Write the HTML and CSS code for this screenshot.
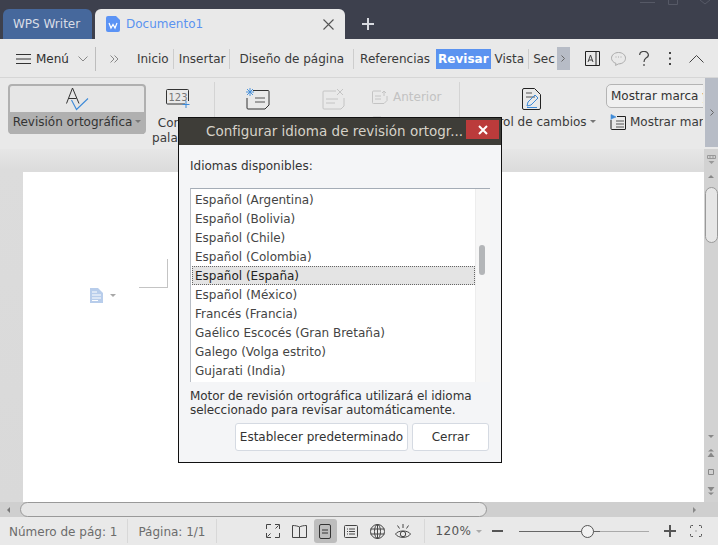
FILE: index.html
```html
<!DOCTYPE html>
<html lang="es">
<head>
  <meta charset="UTF-8" />
  <title>Documento1 - WPS Writer</title>
  <link rel="stylesheet" href="styles.css">
</head>
<body>

<div class="titlebar">
  <div class="tab tab-home">WPS Writer</div>
  <div class="tab tab-doc">
    <svg class="doc-logo" width="14" height="16" viewBox="0 0 14 16"><path d="M2 0h8l4 4v10a2 2 0 0 1-2 2H2a2 2 0 0 1-2-2V2a2 2 0 0 1 2-2z" fill="#5b93f5"/><path d="M3 7l2 5 2-3.500 2 3.500 2-5" fill="none" stroke="#fff" stroke-width="1.200"/></svg>
    <span class="tab-name">Documento1</span>
    <svg class="tab-close" width="11" height="11" viewBox="0 0 11 11"><path d="M.5.500l10 10M10.500.500l-10 10" stroke="#555" stroke-width="1.100"/></svg>
  </div>
  <svg class="tab-add" width="12" height="12" viewBox="0 0 12 12"><path d="M6 0v12M0 6h12" stroke="#d8dae0" stroke-width="2"/></svg>
  <div class="win-controls">
    <svg width="78" height="6" viewBox="0 0 78 6"><path d="M0 2.500h15M28.500-3h9v7.500h-9zM60 0l5 4 5-4" fill="none" stroke="#565966"/></svg>
  </div>
</div>

<div class="menubar">
  <svg class="hamburger" width="15" height="10" viewBox="0 0 15 10"><path d="M0 .500h15M0 5h15M0 9.500h15" stroke="#333" stroke-width="1"/></svg>
  <span class="menu-label">Menú</span>
  <svg class="menu-chev" width="10" height="6" viewBox="0 0 10 6"><path d="M.5.500L5 5 9.500.500" fill="none" stroke="#888"/></svg>
  <span class="menu-sep"></span>
  <svg class="menu-more" width="9" height="8" viewBox="0 0 9 8"><path d="M.5.500L4 4 .5 7.500M4.500.500L8 4 4.500 7.500" fill="none" stroke="#888"/></svg>
  <nav class="menu-tabs">
    <a>Inicio</a><i class="sep-a"></i>
    <a>Insertar</a><i class="sep-b"></i>
    <a>Diseño de página</a><i class="sep-c"></i>
    <a>Referencias</a>
    <a class="active">Revisar</a>
    <a>Vista</a><i class="sep-d"></i>
    <a>Sec</a>
  </nav>
  <div class="menu-scroll"><svg width="4" height="7" viewBox="0 0 4 7"><path d="M.5.500L3.500 3.500.5 6.500" fill="none" stroke="#666"/></svg></div>
  <div class="menu-icons">
    <svg width="15" height="15" viewBox="0 0 15 15"><path d="M.5.500h14v14H.5zM11 .500v14" fill="none" stroke="#222"/><path d="M3 11L5.500 4 8 11M4 9h3" fill="none" stroke="#444"/></svg>
    <svg class="ic-chat" width="15" height="14" viewBox="0 0 15 14"><path d="M7.500.500c4 0 7 2.500 7 5.700s-3 5.700-7 5.700l-3 1.500.5-2C2.300 10.500.500 8.500.500 6.200.5 3 3.500.500 7.500.500z" fill="none" stroke="#aaa"/><path d="M4.500 5h1M7 5h1M9.500 5h1" stroke="#aaa"/></svg>
    <svg class="ic-help" width="10" height="15" viewBox="0 0 10 15"><path d="M.7 4a4.300 3.500 0 1 1 6.300 3C5.500 8 5 9 5 11M5 13v2" fill="none" stroke="#444" stroke-width="1.200"/></svg>
    <svg class="ic-dots" width="3" height="13" viewBox="0 0 3 13"><path d="M0 0h2v2H0zM0 5.500h2v2H0zM0 11h2v2H0z" fill="#444"/></svg>
    <svg class="ic-fold" width="15" height="8" viewBox="0 0 15 8"><path d="M.5 7.500L7.500.500l7 7" fill="none" stroke="#444"/></svg>
  </div>
</div>

<div class="ribbon">
  <div class="spell-btn">
    <div class="spell-top">
      <svg width="23" height="24" viewBox="0 0 23 24"><path d="M.5 16.500L6.500 1 13 16.500M2.500 11.500h8" fill="none" stroke="#333"/><path d="M5.500 13l5 9.500L22 11.500" fill="none" stroke="#3d8ad8" stroke-width="1.100"/></svg>
    </div>
    <div class="spell-label">Revisión ortográfica<b class="caret"></b></div>
  </div>
  <div class="tool tool-count">
    <svg width="24" height="20" viewBox="0 0 24 20"><path d="M19 15H1.500a1 1 0 0 1-1-1V1.500a1 1 0 0 1 1-1h20a1 1 0 0 1 1 1V12" fill="none" stroke="#333"/><text x="2.500" y="11.500" class="count-num">123</text><path d="M20 12v7M16.500 15.500h7" stroke="#3d8ad8"/></svg>
    <span class="tool-text">Contar<br>palabras</span>
  </div>
  <span class="rib-sep"></span>
  <div class="tool tool-comment">
    <svg width="24" height="22" viewBox="0 0 24 22"><path d="M7 2.500h15a1 1 0 0 1 1 1V17l-4 4H2a1 1 0 0 1-1-1V10" fill="none" stroke="#333"/><path d="M9 10h10M9 14h10" stroke="#555"/><path d="M4 0v8M0 4h8M1 1l6 6M7 1L1 7" stroke="#3d8ad8" stroke-width=".9"/></svg>
  </div>
  <div class="tool tool-comment-del">
    <svg width="23" height="22" viewBox="0 0 23 22"><path d="M14 3H2a1 1 0 0 0-1 1v16a1 1 0 0 0 1 1h17l3-3V10" fill="none" stroke="#c4c4c4"/><path d="M4 11h12M4 15h9" stroke="#c4c4c4"/><path d="M15 1l6 6M21 1l-6 6" stroke="#c4c4c4"/></svg>
  </div>
  <div class="nav-tools">
    <div class="nav-row">
      <svg width="16" height="14" viewBox="0 0 16 14"><path d="M9 1H1.500a1 1 0 0 0-1 1v10.500a1 1 0 0 0 1 1H12l3-3V6" fill="none" stroke="#c4c4c4"/><path d="M3 6h6M3 9h6M12 6V1M10 3l2-2 2 2" fill="none" stroke="#c4c4c4"/></svg>
      <span>Anterior</span>
    </div>
    <div class="nav-row">
      <svg width="16" height="14" viewBox="0 0 16 14"><path d="M9 1H1.500a1 1 0 0 0-1 1v10.500a1 1 0 0 0 1 1H12l3-3V6" fill="none" stroke="#c4c4c4"/></svg>
    </div>
  </div>
  <span class="rib-sep"></span>
  <div class="tool tool-track">
    <svg width="19" height="22" viewBox="0 0 19 22"><path d="M12.500.500H2a1.500 1.500 0 0 0-1.500 1.500v18A1.500 1.500 0 0 0 2 21.500h15a1.500 1.500 0 0 0 1.500-1.500V6.500z" fill="none" stroke="#222"/><path d="M4 5h6M4 9h9" stroke="#555"/><path d="M5 18l1-4 7-7 3 3-7 7zM5 19.500h10" fill="none" stroke="#3d8ad8"/></svg>
    <span class="tool-text">Control de cambios<b class="caret"></b></span>
  </div>
  <div class="markup">
    <div class="markup-select">Mostrar marca y revisión</div>
    <div class="markup-row">
      <svg width="16" height="16" viewBox="0 0 16 16"><path d="M1 6v8.500a1 1 0 0 0 1 1h13a.5.5 0 0 0 .5-.5V2.500H7" fill="none" stroke="#222"/><path d="M6 7h8M6 10h8M6 13h8" stroke="#555"/><path d="M1 6V.500l5 2.500-5 2" fill="#3d8ad8" stroke="#3d8ad8" stroke-width=".6"/></svg>
      <span>Mostrar marcadores</span>
    </div>
  </div>
  <div class="ribbon-scroll"><svg width="4" height="7" viewBox="0 0 4 7"><path d="M.5.500L3.500 3.500.5 6.500" fill="none" stroke="#666"/></svg></div>
</div>

<div class="workspace">
  <div class="doc-area">
    <div class="page">
      <div class="crop-mark"></div>
      <svg class="para-icon" width="13" height="15" viewBox="0 0 13 15"><path d="M0 0h8l5 5v10H0z" fill="#b8cdeb"/><path d="M2 4h5M2 7h9M2 10h9M2 12.500h6" stroke="#fff"/></svg>
      <b class="para-caret"></b>
    </div>
  </div>
  <div class="vscroll">
    <svg class="ruler-toggle" width="9" height="9" viewBox="0 0 9 9"><path d="M.5.500h8v3h-8zM3 .500v3M6 .500v3" fill="none" stroke="#999"/><path d="M1.500 6h6L4.500 9z" fill="#999"/></svg>
    <b class="arrow-up"></b>
    <div class="vthumb"></div>
    <b class="arrow-down"></b>
    <svg class="page-nav" width="8" height="8" viewBox="0 0 8 8"><path d="M1 2.500h6L4 0zM.5 8h7L4 3.500z" fill="#888"/></svg>
    <svg class="page-nav" width="8" height="8" viewBox="0 0 8 8"><path d="M1.500 1.500h5v5h-5z" fill="none" stroke="#888"/></svg>
    <svg class="page-nav" width="8" height="8" viewBox="0 0 8 8"><path d="M.5 0h7L4 4.500zM1 5.500h6L4 8z" fill="#888"/></svg>
  </div>
</div>

<div class="hscroll">
  <b class="arrow-left"></b>
  <div class="hthumb"></div>
  <b class="arrow-right"></b>
</div>

<div class="statusbar">
  <span class="st-text st-num">Número de pág: 1</span><i class="st-sep sep-num"></i>
  <span class="st-text st-page">Página: 1/1</span><i class="st-sep sep-page"></i>
  <div class="view-icons">
    <span class="view-btn"><svg width="14" height="14" viewBox="0 0 14 14"><path d="M9 .500h4.500V5M5 .500H.5V5M9 13.500h4.500V9M5 13.500H.5V9M12.500 1.500L9.500 4.500M1.500 12.500l3-3" fill="none" stroke="#444"/></svg></span>
    <span class="view-btn"><svg width="15" height="13" viewBox="0 0 15 13"><path d="M7.500 2v10.500M7.500 2C6 1 3 .500.5.500v12h14V.500C12 .5 9 1 7.500 2z" fill="none" stroke="#444"/></svg></span>
    <span class="view-btn on"><svg width="12" height="15" viewBox="0 0 12 15"><path d="M2 .500h8A1.500 1.500 0 0 1 11.500 2v11a1.500 1.500 0 0 1-1.500 1.500H2A1.500 1.500 0 0 1 .5 13V2A1.500 1.500 0 0 1 2 .500zM3 6h6M3 9h6" fill="none" stroke="#333"/></svg></span>
    <span class="view-btn"><svg width="14" height="13" viewBox="0 0 14 13"><path d="M1.500.500h11a1 1 0 0 1 1 1v10a1 1 0 0 1-1 1h-11a1 1 0 0 1-1-1v-10a1 1 0 0 1 1-1zM5 4h6M5 6.500h6M5 9h6M3 4h1M3 6.500h1M3 9h1" fill="none" stroke="#444"/></svg></span>
    <span class="view-btn"><svg width="15" height="15" viewBox="0 0 15 15"><circle cx="7.500" cy="7.500" r="7" fill="none" stroke="#444"/><ellipse cx="7.500" cy="7.500" rx="3" ry="7" fill="none" stroke="#444"/><path d="M.5 5h14M.5 10h14M7.500.500v14" stroke="#444"/></svg></span>
    <span class="view-btn"><svg width="16" height="17" viewBox="0 0 16 17"><path d="M.5 11C3 7 13 7 15.500 11 13 15.500 3 15.500.5 11z" fill="none" stroke="#444"/><circle cx="8" cy="11" r="2.700" fill="none" stroke="#444"/><path d="M8 1v4M2.500 2.500l2 3M13.500 2.500l-2 3" stroke="#444"/></svg></span>
  </div>
  <i class="st-sep sep-view"></i>
  <span class="zoom-val">120%</span><b class="caret st-caret"></b>
  <svg class="zoom-minus" width="11" height="2" viewBox="0 0 11 2"><path d="M0 1h11" stroke="#555" stroke-width="2"/></svg>
  <div class="zoom-track"><span class="zoom-knob"></span></div>
  <svg class="zoom-plus" width="12" height="12" viewBox="0 0 12 12"><path d="M6 0v12M0 6h12" stroke="#555" stroke-width="2"/></svg>
  <svg class="zoom-fit" width="12" height="12" viewBox="0 0 12 12"><path d="M.5 3V1.500a1 1 0 0 1 1-1H3M9 .500h1.500a1 1 0 0 1 1 1V3M11.500 9v1.500a1 1 0 0 1-1 1H9M3 11.500H1.500a1 1 0 0 1-1-1V9" fill="none" stroke="#555"/><path d="M5.500 5.500h1v1h-1z" fill="#555"/></svg>
</div>

<div class="dialog">
  <div class="dialog-title">
    <span class="dialog-caption">Configurar idioma de revisión ortogr...</span>
    <div class="dialog-close"><svg width="10" height="10" viewBox="0 0 10 10"><path d="M1 1l8 8M9 1L1 9" stroke="#fff" stroke-width="2"/></svg></div>
  </div>
  <div class="dialog-body">
    <div class="lang-heading">Idiomas disponibles:</div>
    <div class="lang-box">
      <ul class="lang-list">
        <li>Español (Argentina)</li>
        <li>Español (Bolivia)</li>
        <li>Español (Chile)</li>
        <li>Español (Colombia)</li>
        <li class="selected">Español (España)</li>
        <li>Español (México)</li>
        <li>Francés (Francia)</li>
        <li>Gaélico Escocés (Gran Bretaña)</li>
        <li>Galego (Volga estrito)</li>
        <li>Gujarati (India)</li>
      </ul>
      <div class="lang-scroll"><span class="lang-thumb"></span></div>
    </div>
    <p class="lang-note">Motor de revisión ortográfica utilizará el idioma seleccionado para revisar automáticamente.</p>
    <div class="dialog-buttons">
      <button class="btn-default">Establecer predeterminado</button>
      <button class="btn-close">Cerrar</button>
    </div>
  </div>
</div>

</body>
</html>
```

FILE: styles.css
```css
:root {
  --text: #3a3a3a;
  --bar: #e9e9e9;
  --rule: #cfcfcf;
  --blue: #5b93f0;
}

html, body {
  height: 100%;
}

body {
  margin: 0;
  position: relative;
  width: 718px;
  height: 545px;
  overflow: hidden;
  display: flex;
  flex-direction: column;
  font-family: "DejaVu Sans", sans-serif;
  font-size: 12px;
  color: var(--text);
  background: var(--bar);
}

svg {
  display: block;
  flex: none;
}

/* title bar */
.titlebar {
  height: 39px;
  flex: none;
  display: flex;
  align-items: flex-end;
  position: relative;
  background: #3d404d;
  padding-left: 3px;
  box-sizing: border-box;
}

.tab {
  height: 30px;
  box-sizing: border-box;
  display: flex;
  align-items: center;
  border-radius: 6px 6px 0 0;
}

.tab-home {
  width: 89px;
  padding-left: 10px;
  background: #46689c;
  color: #d9dde6;
}

.tab-doc {
  width: 250px;
  margin-left: 3px;
  padding-left: 11px;
  background: var(--bar);
}

.tab-name {
  margin-left: 6px;
  color: var(--blue);
}

.tab-close {
  margin-left: auto;
  margin-right: 11px;
}

.tab-add {
  margin: 0 0 9px 17px;
  align-self: flex-end;
}

.win-controls {
  position: absolute;
  top: 0;
  left: 640px;
}

/* menu bar */
.menubar {
  height: 39px;
  flex: none;
  display: flex;
  align-items: center;
  box-sizing: border-box;
  border-bottom: 1px solid #d6d6d6;
  padding: 1px 0 0 16px;
}

.menu-label {
  margin-left: 5px;
  color: #2e2e2e;
}

.menu-chev {
  margin-left: 9px;
}

.menu-sep {
  width: 1px;
  height: 24px;
  margin-left: 7px;
  background: #bdbdbd;
}

.menu-more {
  margin-left: 14px;
}

.menu-tabs {
  display: flex;
  align-items: center;
  margin-left: 18px;
  width: 420px;
}

.menu-tabs a {
  line-height: 20px;
  white-space: nowrap;
}

.menu-tabs i {
  width: 1px;
  height: 20px;
  background: #cdcdcd;
}

.sep-a { margin: 0 5px 0 4px; }
.sep-b { margin: 0 9px 0 4px; }
.sep-c { margin: 0 6px 0 9px; }
.sep-d { margin: 0 4px 0 4px; }

.menu-tabs .active {
  margin: 0 4px 0 6px;
  padding: 0 2px;
  background: var(--blue);
  color: #fff;
  font-weight: bold;
}

.menu-scroll {
  width: 13px;
  height: 23px;
  background: #b7bcc6;
  display: flex;
  align-items: center;
  justify-content: center;
}

.menu-icons {
  display: flex;
  align-items: center;
  margin-left: 15px;
}

.ic-chat { margin-left: 11px; }
.ic-help { margin-left: 13px; }
.ic-dots { margin-left: 20px; }
.ic-fold { margin-left: 17px; }

/* ribbon */
.ribbon {
  height: 71px;
  flex: none;
  display: flex;
  box-sizing: border-box;
  padding: 6px 0 0 8px;
  overflow: hidden;
}

.spell-btn {
  width: 138px;
  height: 50px;
  flex: none;
  box-sizing: border-box;
  border: 2px solid #b0b0b0;
  border-radius: 4px;
  background: #e6e6e6;
}

.spell-top {
  height: 26px;
  display: flex;
  justify-content: center;
  padding-top: 1px;
  box-sizing: border-box;
}

.spell-label {
  height: 22px;
  line-height: 21px;
  background: #b0b0b0;
  white-space: nowrap;
  text-align: center;
  color: #333;
}

.caret {
  display: inline-block;
  width: 0;
  height: 0;
  margin-left: 3px;
  vertical-align: 3px;
  border: 3px solid transparent;
  border-top-color: #777;
  border-bottom: 0;
}

.tool {
  flex: none;
  display: flex;
  flex-direction: column;
  align-items: center;
  text-align: center;
  white-space: nowrap;
}

.tool-text {
  line-height: 15px;
}

.tool-count {
  width: 64px;
  margin-right: 4px;
  padding-top: 5px;
}

.tool-count .tool-text {
  margin-top: 7px;
}

.count-num {
  font-size: 10px;
  fill: #777;
}

.rib-sep {
  width: 1px;
  height: 58px;
  flex: none;
  margin-top: -2px;
  background: #d4d4d4;
}

.tool-comment {
  width: 23px;
  margin-left: 31px;
  padding-top: 4px;
}

.tool-comment-del {
  width: 23px;
  margin-left: 53px;
  padding-top: 4px;
}

.nav-tools {
  width: 87px;
  flex: none;
  margin-left: 27px;
  padding-top: 3px;
  color: #c2c2c2;
}

.nav-row {
  height: 20px;
  display: flex;
  align-items: center;
  gap: 5px;
}

.nav-row + .nav-row {
  margin-top: 6px;
}

.tool-track {
  width: 146px;
  flex: none;
  padding-top: 4px;
}

.tool-track svg {
  margin-right: 3px;
}

.tool-track .tool-text {
  margin-top: 3px;
  line-height: 19px;
}

.markup {
  width: 97px;
  flex: none;
  overflow: hidden;
}

.markup-select {
  width: 130px;
  height: 24px;
  box-sizing: border-box;
  border: 1px solid #b4b4b4;
  border-radius: 5px;
  padding-left: 4px;
  line-height: 22px;
  white-space: nowrap;
  background: #f0f0f0;
  color: #333;
}

.markup-row {
  display: flex;
  align-items: center;
  gap: 4px;
  margin: 6px 0 0 4px;
  white-space: nowrap;
}

.ribbon-scroll {
  flex: none;
  width: 13px;
  height: 69px;
  margin: -6px 0 0 2px;
  background: #b7bcc6;
  display: flex;
  align-items: center;
  justify-content: center;
}

/* document */
.workspace {
  flex: 1;
  min-height: 0;
  display: flex;
}

.doc-area {
  flex: 1;
  padding: 23px 0 0 23px;
  background: linear-gradient(#e6e6e6, #dcdcdc 20px, #d9d9d9);
}

.page {
  height: 100%;
  position: relative;
  background: #fff;
}

.crop-mark {
  width: 28px;
  height: 28px;
  margin-left: 116px;
  position: relative;
  top: 87px;
  border-right: 1px solid #c4c4c4;
  border-bottom: 1px solid #c4c4c4;
}

.para-icon {
  position: absolute;
  left: 67px;
  top: 116px;
}

.para-caret {
  position: absolute;
  left: 87px;
  top: 122px;
  border: 3px solid transparent;
  border-top-color: #a8a8a8;
  border-bottom: 0;
}

.vscroll {
  width: 14px;
  flex: none;
  box-sizing: border-box;
  display: flex;
  flex-direction: column;
  align-items: center;
  padding: 6px 0 7px;
  background: #d2d2d2;
}

.arrow-up, .arrow-down {
  width: 0;
  height: 0;
  border: 3px solid transparent;
}

.arrow-up {
  margin-top: 11px;
  border-top: 0;
  border-bottom: 3px solid #888;
}

.vthumb {
  width: 13px;
  height: 56px;
  margin-top: 9px;
  box-sizing: border-box;
  border: 1px solid #999;
  border-radius: 7px;
  background: #e6e6e6;
}

.arrow-down {
  margin-top: auto;
  border-bottom: 0;
  border-top: 3px solid #888;
}

.page-nav {
  margin-top: 11px;
}

.hscroll {
  height: 15px;
  flex: none;
  display: flex;
  align-items: center;
  background: #cfcfcf;
}

.arrow-left {
  margin-left: 7px;
  border: 3px solid transparent;
  border-right-color: #777;
  border-left: 0;
}

.hthumb {
  width: 467px;
  height: 15px;
  margin-left: 10px;
  box-sizing: border-box;
  border: 1px solid #999;
  border-radius: 8px;
  background: #e6e6e6;
}

.arrow-right {
  margin-left: 206px;
  border: 3px solid transparent;
  border-left-color: #888;
  border-right: 0;
}

/* status bar */
.statusbar {
  height: 28px;
  flex: none;
  display: flex;
  align-items: center;
  color: #6c6c6c;
}

.st-text {
  padding-top: 2px;
}

.st-num {
  margin-left: 9px;
}

.st-sep {
  width: 1px;
  height: 24px;
  background: #d8d8d8;
}

.sep-num { margin-left: 10px; }
.sep-page { margin-left: 10px; }
.sep-view { margin-left: 9px; }

.st-page {
  margin-left: 10px;
}

.view-icons {
  display: flex;
  align-items: center;
  gap: 3px;
  margin-left: 45px;
}

.view-btn {
  width: 23px;
  height: 24px;
  border-radius: 3px;
  display: flex;
  align-items: center;
  justify-content: center;
}

.view-btn.on {
  background: #bdbdbd;
}

.zoom-val {
  margin-left: 11px;
  color: #555;
  letter-spacing: .4px;
}

.st-caret {
  margin-left: 5px;
  vertical-align: 0;
  border-top-color: #aaa;
}

.zoom-minus {
  margin-left: 10px;
}

.zoom-track {
  width: 130px;
  height: 1px;
  margin-left: 16px;
  position: relative;
  background: linear-gradient(to right, #666 0 62%, #aaa 62%);
}

.zoom-knob {
  position: absolute;
  left: 62px;
  top: -6px;
  width: 11px;
  height: 11px;
  border: 1px solid #555;
  border-radius: 50%;
  background: #f2f2f2;
}

.zoom-plus {
  margin-left: 15px;
}

.zoom-fit {
  margin-left: 14px;
}

/* dialog */
.dialog {
  position: absolute;
  left: 178px;
  top: 117px;
  width: 324px;
  height: 346px;
  box-sizing: border-box;
  border: 1px solid #111;
  background: #f4f5f7;
  display: flex;
  flex-direction: column;
}

.dialog-title {
  height: 27px;
  flex: none;
  display: flex;
  background: #3e3d38;
  padding-left: 27px;
}

.dialog-caption {
  font-size: 13.500px;
  line-height: 27px;
  color: #d6d2c8;
  white-space: nowrap;
}

.dialog-close {
  width: 33px;
  height: 19px;
  margin: 2px 2px 0 auto;
  background: #bb3b3b;
  display: flex;
  align-items: center;
  justify-content: center;
}

.dialog-body {
  flex: 1;
  padding: 0 11px;
}

.lang-heading {
  margin-top: 14px;
  line-height: 14px;
  color: #333;
}

.lang-box {
  height: 194px;
  margin-top: 15px;
  box-sizing: border-box;
  border-top: 1px solid #a4acb6;
  border-left: 1px solid #b8bec6;
  display: flex;
  background: #fff;
}

.lang-list {
  flex: 1;
  margin: 1px 0 0;
  padding: 0 0 0 1px;
  list-style: none;
}

.lang-list li {
  height: 19px;
  line-height: 20px;
  padding-left: 3px;
  color: #444;
}

.lang-list .selected {
  box-sizing: border-box;
  border: 1px dotted #666;
  padding-left: 2px;
  line-height: 18px;
  background: #e4e4e4;
  color: #222;
}

.lang-scroll {
  width: 15px;
  flex: none;
  box-sizing: border-box;
  border-left: 1px solid #ededed;
  background: #f6f6f6;
  padding: 56px 0 0 3px;
}

.lang-thumb {
  display: block;
  width: 6px;
  height: 30px;
  border-radius: 3px;
  background: #b4b6b8;
}

.lang-note {
  margin: 7px 0 0;
  line-height: 14px;
  letter-spacing: -.07px;
  color: #333;
}

.dialog-buttons {
  display: flex;
  justify-content: flex-end;
  gap: 4px;
  margin-top: 6px;
  padding-right: 1px;
}

.dialog-buttons button {
  height: 28px;
  box-sizing: border-box;
  border: 1px solid #d5dae2;
  border-radius: 3px;
  padding: 0;
  white-space: nowrap;
  background: #fff;
  font: inherit;
  color: #333;
}

.btn-default {
  width: 173px;
}

.btn-close {
  width: 77px;
}
```
